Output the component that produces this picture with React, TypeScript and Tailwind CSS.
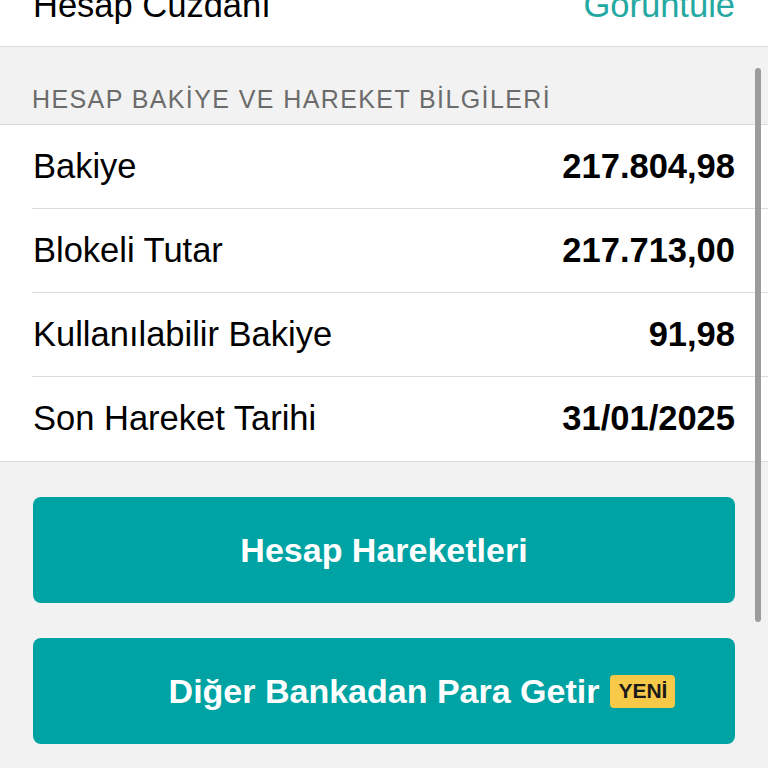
const rows = [
  { label: 'Bakiye', value: '217.804,98' },
  { label: 'Blokeli Tutar', value: '217.713,00' },
  { label: 'Kullanılabilir Bakiye', value: '91,98' },
  { label: 'Son Hareket Tarihi', value: '31/01/2025' },
]

export default function App() {
  return (
    <div
      className="relative h-[768px] w-[768px] overflow-hidden bg-[#f2f2f2]"
      style={{ fontFamily: '"Liberation Sans", Arial, sans-serif' }}
    >
      {/* Hesap cüzdanı row, scrolled partly out of view */}
      <div className="-mt-[38px] flex h-[85px] items-center justify-between border-b border-[#dcdcdc] bg-white pl-[33px] pr-[33px] pt-[4px]">
        <span className="text-[34.5px] text-black">Hesap Cüzdanı</span>
        <span className="text-[34.5px] text-[#24a8a2]">Görüntüle</span>
      </div>

      {/* Section header */}
      <div className="flex h-[77px] items-end pb-[6px] pl-[32px]">
        <span className="text-[25px] tracking-[1.4px] text-[#6b6b6b]">HESAP BAKİYE VE HAREKET BİLGİLERİ</span>
      </div>

      {/* Balance list */}
      <div className="border-y border-[#dcdcdc] bg-white">
        {rows.map((row, i) => (
          <div key={row.label} className="pl-[32px]">
            <div
              className={`flex h-[84px] items-center justify-between pr-[33px] ${
                i < rows.length - 1 ? 'border-b border-[#dcdcdc]' : ''
              }`}
            >
              <span className="pl-px text-[34.5px] text-black">{row.label}</span>
              <span className="text-[34.5px] font-bold text-black">{row.value}</span>
            </div>
          </div>
        ))}
      </div>

      {/* Actions */}
      <div className="flex flex-col gap-[35px] px-[33px] pt-[35px]">
        <button className="flex h-[106px] items-center justify-center rounded-[8px] bg-[#00a3a3] text-[34px] font-bold text-white">
          Hesap Hareketleri
        </button>
        <button className="flex h-[106px] items-center justify-center gap-[11px] rounded-[8px] bg-[#00a3a3] pl-[76px] text-[34px] font-bold text-white">
          <span>Diğer Bankadan Para Getir</span>
          <span className="flex h-[33px] items-center rounded-[4px] bg-[#f7c948] px-[8px] text-[21px] font-bold text-[#1a1a1a]">
            YENİ
          </span>
        </button>
      </div>

      {/* Scroll indicator */}
      <div className="absolute right-[7px] top-[68px] h-[554px] w-[6px] rounded-full bg-[#9c9c9c]" />
    </div>
  )
}
